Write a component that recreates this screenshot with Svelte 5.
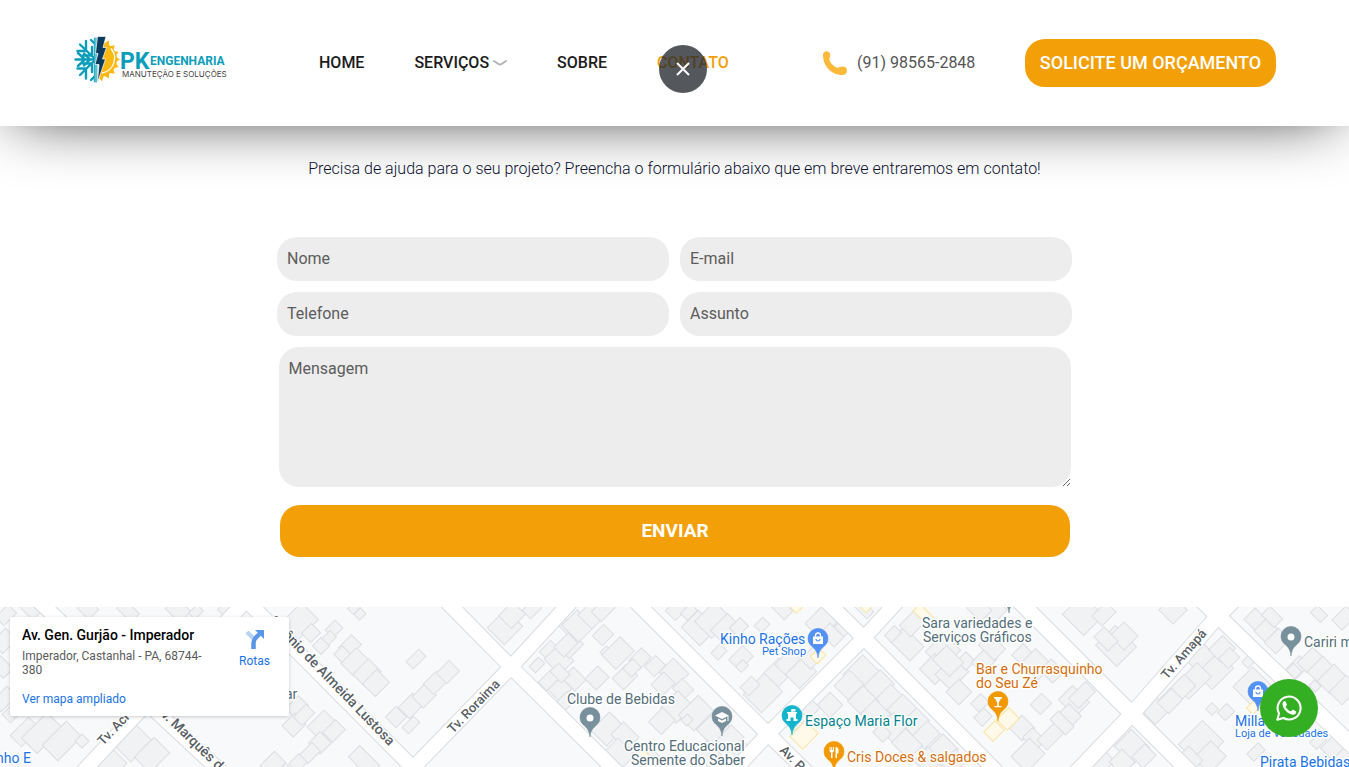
<script>
  const roads = [
    { w: 14, d: 'M240 -13L253 0L413 161L425 173' },
    { w: 14, d: 'M400 174L414 160L511 60L578 -13' },
    { w: 14, d: 'M438 -14L452 0L511 60L626 174' },
    { w: 14, d: 'M627 -14L641 0L768 127L816 174' },
    { w: 14, d: 'M724 174L768 127L864 31L906 -15' },
    { w: 14, d: 'M818 -14L864 31L1006 174' },
    { w: 15, d: 'M1011 -14L1132 107L1199 174' },
    { w: 15, d: 'M1068 174L1132 107L1218 9L1240 -13' },
    { w: 15, d: 'M1196 -12L1218 9L1363 149' },
    { w: 14, d: 'M74 174L134 110L250 -10' },
    { w: 14, d: 'M30 -14L162 110L231 174' }
  ];

  // centre x, centre y, side along the south-east axis, side along the north-east axis
  const buildings = [
    [6, 8, 12, 18], [30, 3, 18, 10], [88, 2, 16, 14], [128, 4, 20, 12], [178, 3, 20, 16], [196, 5, 9, 12], [226, 4, 14, 10],
    [4, 34, 16, 20], [2, 60, 18, 14], [4, 92, 14, 22], [25, 125, 16, 26], [42, 126, 22, 36], [62, 134, 22, 34], [82, 134, 10, 10], [12, 106, 12, 16],
    [133, 136, 24, 30], [152, 148, 22, 28], [112, 157, 20, 22], [98, 150, 10, 14], [273, 157, 16, 20], [287, 166, 16, 12],
    [297, 100, 14, 18], [294, 118, 16, 18], [304, 108, 12, 18], [322, 118, 18, 24], [334, 124, 14, 18], [320, 136, 16, 16], [310, 146, 12, 18], [298, 156, 12, 14], [364, 154, 28, 16],
    [300, 14, 24, 28], [311, 26, 13, 14], [334, 22, 11, 14], [329, 31, 9, 12], [321, 39, 12, 12], [350, 39, 14, 18], [343, 48, 14, 12], [355, 55, 18, 22], [367, 66, 18, 22], [376, 76, 18, 20], [360, 7, 8, 9], [354, 1, 8, 10],
    [416, 52, 10, 18], [396, 110, 15, 15], [411, 99, 16, 20], [424, 89, 16, 18], [435, 76, 15, 18], [448, 65, 15, 18], [411, 118, 9, 16],
    [505, 20, 24, 26], [512, 8, 18, 20], [532, 2, 12, 16], [566, 19, 18, 10], [550, 44, 14, 16], [537, 58, 9, 13], [559, 53, 22, 20], [570, 38, 18, 20], [549, 73, 12, 18], [560, 82, 16, 18], [566, 94, 12, 14],
    [578, 19, 24, 22], [592, 8, 20, 20], [604, 2, 14, 22], [603, 28, 14, 16], [606, 45, 8, 9], [618, 46, 20, 26], [566, 38, 14, 20], [574, 72, 18, 16], [560, 66, 16, 12], [597, 71, 16, 18], [640, 52, 14, 18], [655, 59, 14, 16], [625, 70, 16, 20], [632, 61, 12, 14],
    [674, 66, 22, 20], [663, 77, 16, 18], [683, 82, 16, 14], [677, 100, 22, 24], [662, 114, 18, 20], [696, 106, 22, 28], [687, 113, 8, 9], [608, 122, 22, 26], [625, 129, 22, 18], [620, 146, 24, 18], [714, 122, 24, 26], [730, 132, 18, 22], [708, 147, 20, 18], [650, 154, 16, 20], [740, 142, 12, 16],
    [676, 3, 14, 16], [689, 5, 10, 14], [699, 21, 26, 24], [713, 13, 24, 28], [726, 22, 20, 24], [739, 20, 12, 15], [762, 18, 10, 12], [719, 45, 10, 13], [741, 51, 15, 20], [742, 59, 8, 10], [778, 66, 20, 22], [789, 56, 18, 22], [801, 66, 20, 24], [763, 86, 26, 30], [750, 79, 12, 16], [780, 0, 24, 12], [822, 15, 22, 26], [812, 51, 14, 18], [830, 98, 18, 18], [806, 101, 20, 20], [795, 111, 18, 18],
    [832, 28, 20, 14], [844, 20, 14, 14], [864, 2, 18, 10], [907, 37, 28, 20], [893, 27, 10, 14], [912, 17, 16, 20], [943, 44, 24, 26], [935, 62, 22, 22], [952, 66, 22, 26], [966, 54, 13, 13], [959, 85, 18, 18], [948, 54, 24, 20], [984, 54, 16, 20], [992, 40, 22, 16], [1022, 47, 13, 16], [1037, 57, 24, 20], [1052, 64, 18, 16], [1041, 97, 14, 16], [980, 96, 12, 14], [983, 110, 12, 14], [993, 3, 20, 20], [979, 2, 20, 16],
    [862, 67, 26, 28], [849, 78, 20, 22], [878, 79, 20, 26], [890, 92, 20, 22], [863, 94, 22, 22], [902, 102, 20, 22], [876, 107, 22, 20], [915, 115, 18, 22], [893, 120, 20, 22], [926, 128, 18, 22], [907, 137, 24, 20], [942, 143, 22, 24], [928, 154, 20, 20], [882, 126, 14, 12], [954, 155, 16, 20], [1022, 121, 18, 18], [1034, 132, 18, 14], [1028, 148, 22, 26], [1074, 94, 24, 20], [1082, 88, 14, 24], [1068, 110, 18, 20], [1052, 128, 14, 28], [1062, 116, 22, 12], [1100, 153, 22, 20],
    [1083, 8, 30, 28], [1116, 39, 30, 28], [1124, 29, 20, 20], [1173, 3, 20, 20], [1104, 7, 14, 20], [1106, 32, 20, 14], [1202, 52, 22, 24], [1215, 64, 22, 30], [1193, 74, 20, 32], [1178, 85, 16, 34], [1156, 104, 18, 20], [1170, 94, 16, 20], [1222, 42, 18, 20], [1229, 51, 14, 16], [1212, 102, 9, 9], [1226, 105, 11, 13], [1132, 140, 26, 24], [1144, 149, 16, 18], [1201, 136, 30, 34], [1210, 150, 22, 24], [1188, 154, 20, 22], [1122, 155, 18, 18], [1248, 55, 9, 9], [1252, 79, 26, 28], [1256, 145, 10, 16],
    [1256, 13, 18, 16], [1266, 23, 16, 18], [1277, 34, 16, 20], [1272, 10, 18, 12], [1298, 60, 14, 18], [1310, 53, 14, 22], [1320, 62, 14, 22], [1332, 72, 18, 24], [1344, 83, 18, 24], [1294, 64, 12, 10], [1319, 7, 14, 10], [1344, 11, 14, 20], [1315, 79, 9, 8], [1334, 142, 20, 18], [1318, 134, 10, 14], [1344, 152, 16, 20]
  ];

  const shops = [
    [818, 49, 10, 12], [804, 128, 18, 22], [994, 124, 13, 16], [1008, 112, 15, 17], [797, 0, 8, 10],
    [925, 9, 24, 10], [866, 0, 8, 8], [1254, 100, 9, 12], [641, 147, 12, 10]
  ];

  const streets = [
    { t: 'Antônio de Almeida Lustosa', x: 267, y: 13, a: 46, l: true },
    { t: 'Tv. Roraima', x: 453, y: 127, a: -46 },
    { t: 'Tv. Amapá', x: 1167, y: 73, a: -49 },
    { t: 'Tv. Acre', x: 103, y: 139, a: -46 },
    { t: 'Av. Marquês de', x: 154, y: 102, a: 44, l: true },
    { t: 'Av. Pres.', x: 779, y: 144, a: 45 }
  ];

  const pins = [
    { x: 818, y: 32, c: '#5491f5', k: 'bag' },
    { x: 590, y: 111, c: '#78909c', k: 'dot' },
    { x: 722, y: 110, c: '#78909c', k: 'cap' },
    { x: 792, y: 109, c: '#12b5cb', k: 'fort' },
    { x: 834, y: 145, c: '#f29900', k: 'food' },
    { x: 998, y: 95, c: '#f29900', k: 'glass' },
    { x: 1291, y: 30, c: '#78909c', k: 'dot' },
    { x: 1258, y: 85, c: '#5491f5', k: 'bag' },
    { x: 1009, y: -13, c: '#78909c', k: 'dot' }
  ];

  const places = [
    { t: 'Kinho Rações', x: 720, y: 37, c: '#1a73e8' },
    { t: 'Pet Shop', x: 762, y: 48, c: '#1a73e8', s: true },
    { t: 'Clube de Bebidas', x: 567, y: 97, c: '#546e7a' },
    { t: 'Centro Educacional', x: 624, y: 144, c: '#546e7a' },
    { t: 'Semente do Saber', x: 631, y: 158, c: '#546e7a' },
    { t: 'Espaço Maria Flor', x: 805, y: 119, c: '#00838f' },
    { t: 'Cris Doces & salgados', x: 847, y: 155, c: '#d56e0c' },
    { t: 'Sara variedades e', x: 922, y: 21, c: '#546e7a' },
    { t: 'Serviços Gráficos', x: 923, y: 35, c: '#546e7a' },
    { t: 'Bar e Churrasquinho', x: 976, y: 67, c: '#d56e0c' },
    { t: 'do Seu Zé', x: 976, y: 81, c: '#d56e0c' },
    { t: 'Cariri m', x: 1304, y: 40, c: '#546e7a' },
    { t: 'Milla Modas', x: 1235, y: 119, c: '#1a73e8' },
    { t: 'Loja de Variedades', x: 1235, y: 130, c: '#1a73e8', s: true },
    { t: 'Pirata Bebidas', x: 1260, y: 160, c: '#1a73e8' },
    { t: 'nho E', x: -4, y: 156, c: '#1a73e8' },
    { t: 'ar', x: 285, y: 92, c: '#546e7a' }
  ];

  const fields = [
    { id: 'nome', label: 'Nome', type: 'text' },
    { id: 'email', label: 'E-mail', type: 'email' },
    { id: 'telefone', label: 'Telefone', type: 'tel' },
    { id: 'assunto', label: 'Assunto', type: 'text' }
  ];

  const spikes = Array.from({ length: 9 }, (_, i) => -80 + i * 20);
</script>

<header class="top">
  <a class="logo" href="#inicio" aria-label="PK Engenharia">
    <svg width="152" height="50" viewBox="0 0 152 50">
      <g stroke="#0b9dba" stroke-width="2.4" fill="none" stroke-linecap="round">
        <path d="M2.500 24.500H22M5 18l7 6.500-7 6.500M11 18.500l6 6-6 6" />
        <path d="M7 9.500L22 24M13 6v10H4.500M19 12v8.500H10M7 40L22 25M13 43.500V33.500H4.500M19 37v-8.500H10" />
        <path d="M22 4v42M18 5l4 4M18 45l4-4" />
      </g>
      <path d="M21.500 2.500h3v45h-3z" fill="#5cbfd2" />
      <g fill="#fdb913">
        {#each spikes as a}
          <path d="M-3 -17L0 -22L3 -17z" transform="translate(25 24.500) rotate({a + 90})" />
        {/each}
        <path d="M27 7.500a17 17 0 0 1 0 34l-2.500-.5 2-6a11 11 0 0 0 0-21z" />
        <path d="M29 12a12.500 12.500 0 0 1-2 25z" />
      </g>
      <path d="M38 13.500a15 15 0 0 1-9 24.500" stroke="#fff" stroke-width="1.300" fill="none" />
      <path d="M24.500 1.500h8.500l-3 11h3.500l-4 11.500h3l-8 23.500 1.500-18h-4l3-11h-2.500z" fill="#0b3a5b" stroke="#fff" stroke-width=".7" />
      <text class="pk" x="47" y="34">PK</text>
      <text class="eng" x="77" y="30">ENGENHARIA</text>
      <text class="sub" x="49" y="42">MANUTEÇÃO E SOLUÇÕES</text>
    </svg>
  </a>

  <nav aria-label="Principal">
    <ul>
      <li><a href="#inicio">HOME</a></li>
      <li>
        <a href="#servicos">SERVIÇOS
          <svg width="14" height="8" viewBox="0 0 14 8" aria-hidden="true"><path d="M1 2l4.500 3q1.500 1 3 0L13 2" fill="none" stroke="#b3b3b3" stroke-width="2" stroke-linecap="round" /></svg>
        </a>
      </li>
      <li><a href="#sobre">SOBRE</a></li>
      <li class="current">
        <a href="#contato" aria-current="page">CONTATO</a>
        <button class="close" type="button" aria-label="Fechar">
          <svg width="16" height="16" viewBox="0 0 16 16"><path d="M2 2l12 12M14 2L2 14" stroke="#fff" stroke-width="2" /></svg>
        </button>
      </li>
    </ul>
  </nav>

  <a class="phone" href="tel:+5591985652848">
    <svg width="26" height="26" viewBox="0 0 26 26" aria-hidden="true">
      <path d="M1 5C1 2.500 3 1 5 1.200 7 1.400 8.300 3 8.300 5c0 2-.8 3.200-1 4.200 1 4 4.200 7.300 8.300 8.600 1.400-.5 2.800-1.300 4.900-1.300 2.800 0 4.500 1.600 4.500 4 0 2.800-2 4.500-5 4.500C9.500 25 1 16 1 5z" fill="#fdb93a" />
    </svg>
    (91) 98565-2848
  </a>
  <a class="quote" href="#contato">SOLICITE UM ORÇAMENTO</a>
</header>

<main>
  <section class="contact" id="contato">
    <p>Precisa de ajuda para o seu projeto? Preencha o formulário abaixo que em breve entraremos em contato!</p>
    <form onsubmit={(e) => e.preventDefault()}>
      {#each fields as f}
        <input id={f.id} type={f.type} placeholder={f.label} aria-label={f.label} />
      {/each}
      <textarea id="mensagem" placeholder="Mensagem" aria-label="Mensagem"></textarea>
      <button class="send" type="submit">ENVIAR</button>
    </form>
  </section>

  <section class="map" aria-label="Mapa">
    <svg class="canvas" viewBox="0 0 1349 160" preserveAspectRatio="xMidYMid slice">
      <rect width="1349" height="160" fill="#f8f9fb" />
      <g fill="#f1f2f4" stroke="#dcdee2" stroke-width="1">
        {#each buildings as [x, y, w, h]}
          <rect x={-w / 2} y={-h / 2} width={w} height={h} transform="translate({x} {y}) rotate(45)" />
        {/each}
      </g>
      <g fill="#fef9e8" stroke="#fbe3a0" stroke-width="1">
        {#each shops as [x, y, w, h]}
          <rect x={-w / 2} y={-h / 2} width={w} height={h} transform="translate({x} {y}) rotate(45)" />
        {/each}
      </g>
      <g fill="none">
        {#each roads as r}<path d={r.d} stroke="#d9dbe0" stroke-width={r.w + 2} />{/each}
        {#each roads as r}<path d={r.d} stroke="#fff" stroke-width={r.w} />{/each}
      </g>
      {#each streets as s}
        <text class="street" class:large={s.l} transform="translate({s.x} {s.y}) rotate({s.a})">{s.t}</text>
      {/each}
      {#each pins as p}
        <g transform="translate({p.x} {p.y})">
          <path d="M0 19C-.8 12-3 10-6.500 7A10 10 0 1 1 6.500 7C3 10 .8 12 0 19z" fill={p.c} stroke={p.c} stroke-width=".6" />
          {#if p.k === 'dot'}
            <circle r="3.500" fill="#fff" />
          {:else if p.k === 'bag'}
            <path d="M-5-2.500H5V5H-5z" fill="#fff" /><path d="M-2.500-2v-1.500a2.500 2.500 0 0 1 5 0V-2" fill="none" stroke="#fff" stroke-width="1.300" /><path d="M-2 0a2 2 0 0 0 4 0" fill="none" stroke={p.c} stroke-width="1.200" />
          {:else if p.k === 'cap'}
            <path d="M0-5L7-1.500 0 2-7-1.500zM-4 1.500L0 3.500 4 1.500V4L0 6-4 4zM5.500-1H6.500V4H5.500z" fill="#fff" />
          {:else if p.k === 'fort'}
            <path d="M-5.500 5V3H-4V-2.500H-5V-4H-.7V-7H3.500V-4.500H.7V-4H5V-2.500H4V3H5.500V5H1.500V1.500H-1.500V5z" fill="#fff" />
          {:else if p.k === 'food'}
            <path d="M-4.500-5v3.500a2 2 0 0 0 1.500 2V6h1.500V.5a2 2 0 0 0 1.500-2V-5h-1v3h-.8v-3h-1v3h-.8v-3zM1.500-5V6H3V1.500h1.500v-4C4.500-4 3-5 1.500-5z" fill="#fff" />
          {:else}
            <path d="M-4-5h8v1.500h-1L.8.500V4H3.500v1.200h-7V4H-.8V.5L-3-3.500h-1z" fill="#fff" />
          {/if}
        </g>
      {/each}
      {#each places as p}
        <text class="place" class:small={p.s} x={p.x} y={p.y} fill={p.c}>{p.t}</text>
      {/each}
    </svg>

    <div class="card">
      <div class="address">
        <strong>Av. Gen. Gurjão - Imperador</strong>
        <span>Imperador, Castanhal - PA, 68744-380</span>
        <a href="#mapa">Ver mapa ampliado</a>
      </div>
      <a class="routes" href="#rotas">
        <svg width="22" height="20" viewBox="0 0 22 20" aria-hidden="true">
          <path d="M3 3l6 6" stroke="#b9d3f6" stroke-width="4.500" />
          <path d="M9.500 20v-6q0-3 2-5l4-4" fill="none" stroke="#5b97e6" stroke-width="4.500" />
          <path d="M11 1h9v9z" fill="#5b97e6" />
        </svg>
        Rotas
      </a>
    </div>
  </section>
</main>

<a class="whats" href="#whatsapp" aria-label="WhatsApp">
  <svg width="28" height="28" viewBox="0 0 30 30">
    <path d="M2.500 27.500l1.800-6.600A12.300 12.300 0 1 1 9 25.700z" fill="none" stroke="#fff" stroke-width="2.200" stroke-linejoin="round" />
    <path d="M10.500 7.500c-1.500.2-2.600 1.800-2.500 3.600.4 5.200 6 10.700 11 11 2 .1 3.800-1.300 3.800-3.200 0-.5-3.500-2.300-4-2.100-.7.300-1.300 1.900-2 1.800-2-.5-4.700-3-5.300-5-.1-.7 1.300-1.400 1.300-2.100 0-.6-1.500-4-2.300-4z" fill="#fff" />
  </svg>
</a>

<style>
  :global(body) {
    margin: 0;
    background: #fff;
    font-family: Roboto, "Liberation Sans", sans-serif;
    font-size: 16px;
  }
  a {
    color: inherit;
    text-decoration: none;
  }
  .top {
    position: relative;
    z-index: 2;
    display: grid;
    grid-template-columns: 246fr 503fr 203fr 251fr;
    align-items: center;
    box-sizing: border-box;
    height: 126px;
    padding: 0 73px;
    background: #fff;
    box-shadow: 0 0 66px -15px #000;
  }
  .logo svg {
    display: block;
    overflow: visible;
    margin-bottom: 6px;
  }
  .pk,
  .eng {
    font-family: Roboto, sans-serif;
    font-weight: 700;
    fill: #0b9dba;
  }
  .pk {
    font-size: 23px;
  }
  .eng {
    font-size: 12px;
  }
  .sub {
    font-family: Inter, sans-serif;
    font-size: 8px;
    fill: #444;
  }
  ul {
    display: flex;
    gap: 50px;
    margin: 0;
    padding: 0;
    list-style: none;
  }
  li {
    position: relative;
    color: #1c1c1c;
    font-weight: 500;
    line-height: 24px;
  }
  li a {
    display: flex;
    align-items: center;
    gap: 4px;
  }
  .current {
    color: #f3a008;
  }
  .close {
    position: absolute;
    top: -6px;
    left: 2px;
    display: grid;
    place-items: center;
    width: 48px;
    height: 48px;
    padding: 0;
    border: 0;
    border-radius: 50%;
    background: rgb(32 37 43 / 0.77);
  }
  .phone {
    display: flex;
    align-items: center;
    gap: 9px;
    color: #555;
    font-weight: 400;
    line-height: 24px;
    white-space: nowrap;
  }
  .quote {
    border-radius: 20px;
    background: #f3a008;
    color: #fff;
    font-size: 18px;
    font-weight: 500;
    line-height: 48px;
    text-align: center;
    white-space: nowrap;
  }
  .contact {
    padding: 31px 24px 50px;
  }
  .contact p {
    position: relative;
    z-index: 3;
    margin: 0 0 56px;
    color: #0b1030;
    font-weight: 300;
    line-height: 24px;
    text-align: center;
  }
  form {
    display: grid;
    grid-template-columns: 1fr 1fr;
    gap: 11px;
    max-width: 795px;
    margin: 0 auto;
  }
  input,
  textarea {
    box-sizing: border-box;
    width: 100%;
    min-width: 0;
    padding: 10px;
    border: 0;
    border-radius: 20px;
    background: #ededed;
    font: 400 16px/24px Roboto, sans-serif;
  }
  input {
    height: 44px;
    padding: 9px 10px 11px;
  }
  ::placeholder {
    color: #5c5c5c;
    opacity: 1;
  }
  textarea {
    display: block;
    grid-column: 1 / -1;
    justify-self: center;
    width: calc(100% - 3px);
    height: 140px;
    resize: vertical;
  }
  .send {
    grid-column: 1 / -1;
    height: 52px;
    margin: 7px 2px 0 3px;
    border: 0;
    border-radius: 20px;
    background: #f3a008;
    color: #fff;
    font: 700 19px/24px Roboto, sans-serif;
  }
  .map {
    position: relative;
    overflow: hidden;
  }
  .canvas {
    display: block;
    width: 100%;
    height: 160px;
  }
  .street,
  .place {
    paint-order: stroke;
    stroke: #fff;
    stroke-width: 3px;
    stroke-linejoin: round;
    font-size: 14px;
  }
  .street {
    fill: #5a5f66;
    font-size: 13px;
    font-weight: 500;
  }
  .large {
    font-size: 14px;
  }
  .small {
    font-size: 11px;
  }
  .card {
    position: absolute;
    top: 10px;
    left: 10px;
    display: flex;
    justify-content: space-between;
    box-sizing: border-box;
    width: 279px;
    height: 99px;
    padding: 11px 19px 10px 12px;
    border-radius: 2px;
    background: #fff;
    box-shadow: 0 1px 4px -1px rgb(0 0 0 / 0.3);
    color: #5b5b5b;
    font-size: 12px;
    line-height: 14px;
  }
  .address {
    display: flex;
    flex-direction: column;
    width: 190px;
  }
  .address strong {
    margin-bottom: 7px;
    color: #000;
    font-size: 14px;
    font-weight: 500;
  }
  .address a {
    margin-top: 15px;
  }
  .address a,
  .routes {
    color: #1a73e8;
  }
  .routes {
    display: flex;
    flex-direction: column;
    align-items: center;
    gap: 5px;
    padding-top: 1px;
  }
  .whats {
    position: fixed;
    right: 31px;
    bottom: 30px;
    z-index: 4;
    display: grid;
    place-items: center;
    width: 58px;
    height: 58px;
    border-radius: 50%;
    background: #34af23;
  }
</style>
